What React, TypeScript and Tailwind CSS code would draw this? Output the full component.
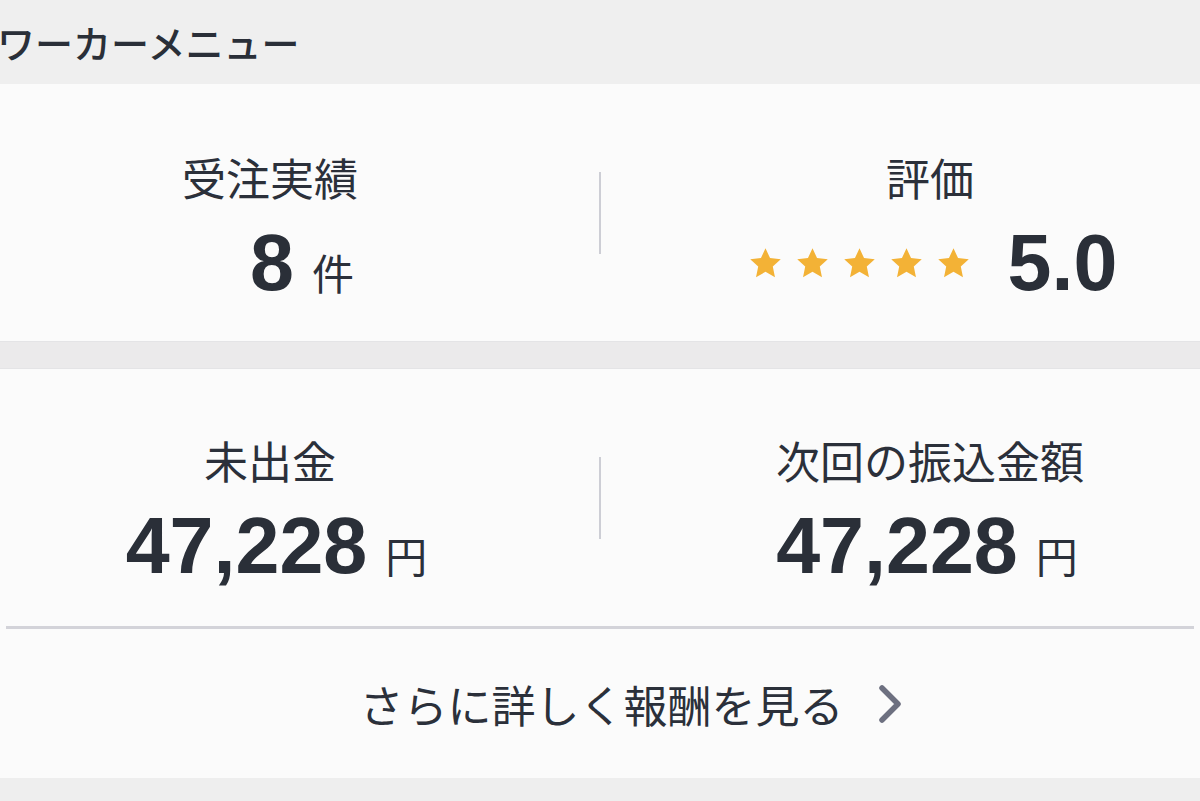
import React from "react";

const JP = { fontFamily: '"Noto Sans CJK JP", "Noto Sans", sans-serif' };
const NUM = { fontFamily: '"Liberation Sans", Arial, sans-serif' };

function Star() {
  return (
    <svg width="33" height="32" viewBox="0 0 24 23" className="block">
      <path
        d="M12 0.8l3.3 7.1 7.8.9-5.8 5.3 1.6 7.7L12 17.9l-6.9 3.9 1.6-7.7L.9 8.8l7.8-.9z"
        fill="#f3b236"
      />
    </svg>
  );
}

function Label({ children }: { children: React.ReactNode }) {
  return (
    <div className="text-[44px] leading-[50px] text-[#2b303a]" style={JP}>
      {children}
    </div>
  );
}

function Value({ num, unit, className = "" }: { num: string; unit: string; className?: string }) {
  return (
    <div className={`flex items-baseline justify-center mt-[21px] ${className}`}>
      <span className="text-[79px] leading-none font-bold text-[#2a2f38]" style={NUM}>
        {num}
      </span>
      <span className="text-[42px] leading-none text-[#2b303a] ml-[18px]" style={JP}>
        {unit}
      </span>
    </div>
  );
}

function VDivider() {
  return <div className="mx-auto mt-[88px] w-[2px] h-[82px] bg-[#cdced5]" />;
}

export default function App() {
  return (
    <div className="w-[1200px] h-[801px] bg-[#eeeeee] overflow-hidden">
      <div className="h-[84px] flex items-center bg-[#efefef]">
        <h1 className="text-[38px] leading-none text-[#2a2f38] ml-[-3px] font-medium whitespace-nowrap" style={JP}>
          ワーカーメニュー
        </h1>
      </div>

      <div className="h-[258px] bg-[#fbfbfb] grid grid-cols-[540px_120px_540px] border-b border-[#e4e4e6]">
        <div className="flex flex-col items-center pt-[68px]">
          <Label>受注実績</Label>
          <Value num="8" unit="件" className="pl-[64px]" />
        </div>
        <VDivider />
        <div className="flex flex-col items-center pt-[68px]">
          <Label>評価</Label>
          <div className="flex items-center justify-center mt-[21px] pl-[6px]">
            <div className="flex items-center gap-[14px]">
              <Star />
              <Star />
              <Star />
              <Star />
              <Star />
            </div>
            <span
              className="text-[79px] leading-none font-bold text-[#2a2f38] ml-[38px]"
              style={NUM}
            >
              5.0
            </span>
          </div>
        </div>
      </div>

      <div className="h-[26px] bg-[#ebeaeb]" />

      <div className="h-[410px] bg-[#fbfbfb] flex flex-col border-t border-[#e4e4e6]">
        <div className="h-[257px] grid grid-cols-[540px_120px_540px]">
          <div className="flex flex-col items-center pt-[66px]">
            <Label>未出金</Label>
            <Value num="47,228" unit="円" className="pl-[13px]" />
          </div>
          <VDivider />
          <div className="flex flex-col items-center pt-[66px]">
            <Label>次回の振込金額</Label>
            <Value num="47,228" unit="円" className="pr-[6px]" />
          </div>
        </div>
        <div className="mx-[6px] h-[3px] bg-[#d3d3d9]" />
        <div className="flex-1 flex items-center justify-center pl-[64px]">
          <span className="text-[44px] leading-none text-[#2b303a]" style={JP}>
            さらに詳しく報酬を見る
          </span>
          <svg width="30" height="42" viewBox="0 0 30 42" className="ml-[31px]">
            <path
              d="M7 5 L23 21 L7 37"
              fill="none"
              stroke="#6d7080"
              strokeWidth="5.5"
              strokeLinecap="round"
              strokeLinejoin="round"
            />
          </svg>
        </div>
      </div>
    </div>
  );
}
